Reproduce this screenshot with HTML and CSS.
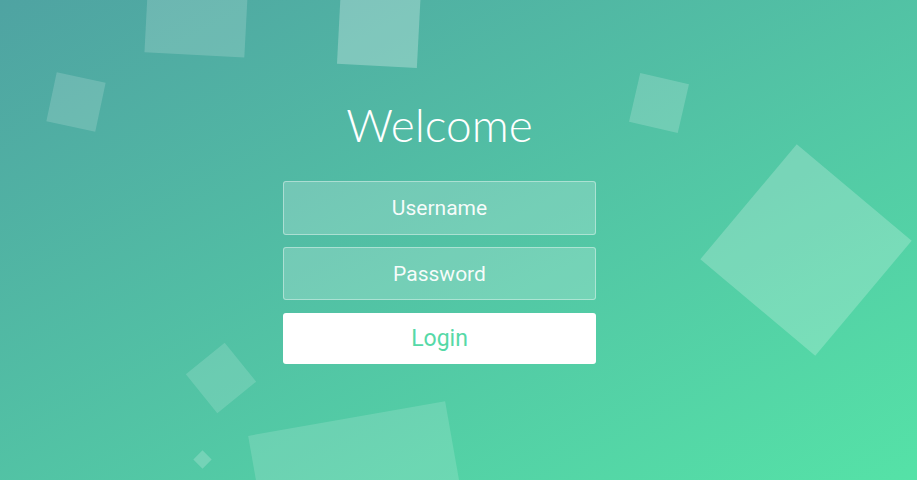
FILE: index.html
```html
<!DOCTYPE html>
<html lang="en">
<head>
<meta charset="utf-8">
<title>Welcome</title>
<link rel="stylesheet" href="styles.css">
</head>
<body>
<div class="page">
  <ul class="bubbles">
    <li class="bubble b1"></li>
    <li class="bubble b2"></li>
    <li class="bubble b3"></li>
    <li class="bubble b4"></li>
    <li class="bubble b5"></li>
    <li class="bubble b6"></li>
    <li class="bubble b7"></li>
    <li class="bubble b8"></li>
  </ul>
  <div class="container">
    <h1 class="title">Welcome</h1>
    <form class="form">
      <input class="field" type="text" placeholder="Username">
      <input class="field" type="password" placeholder="Password">
      <button class="btn" type="button">Login</button>
    </form>
  </div>
</div>
</body>
</html>
```

FILE: styles.css
```css
* { box-sizing: border-box; }
html, body { margin: 0; padding: 0; }
body {
  width: 917px;
  height: 480px;
  overflow: hidden;
  font-family: Roboto, "Liberation Sans", sans-serif;
}
.page {
  position: relative;
  width: 917px;
  height: 480px;
  overflow: hidden;
  background: linear-gradient(to bottom right, #4fa3a2 0%, #55e2a7 100%);
}
.bubbles {
  position: absolute;
  inset: 0;
  margin: 0;
  padding: 0;
  list-style: none;
  z-index: 0;
}
.bubble {
  position: absolute;
  background: rgba(255, 255, 255, 0.18);
}
.b1 { width: 100px; height: 100px; left: 147px; top: -45px; transform: rotate(3deg); background: rgba(255,255,255,0.17); }
.b2 { width: 80px; height: 80px; left: 339px; top: -14px; transform: rotate(3deg); background: rgba(255,255,255,0.27); }
.b3 { width: 50px; height: 50px; left: 51px; top: 77px; transform: rotate(12deg); background: rgba(255,255,255,0.16); }
.b4 { width: 50px; height: 50px; left: 634px; top: 78px; transform: rotate(13deg); background: rgba(255,255,255,0.18); }
.b5 { width: 150px; height: 150px; left: 731px; top: 175px; transform: rotate(40deg); background: rgba(255,255,255,0.22); }
.b6 { width: 50px; height: 50px; left: 196px; top: 353px; transform: rotate(51deg); background: rgba(255,255,255,0.15); }
.b7 { width: 13px; height: 13px; left: 196px; top: 453px; transform: rotate(45deg); background: rgba(255,255,255,0.2); }
.b8 { width: 200px; height: 200px; left: 264px; top: 417px; transform: rotate(-10deg); background: rgba(255,255,255,0.15); }

.container {
  position: relative;
  z-index: 1;
  width: 313px;
  margin-left: 283px;
  padding-top: 93px;
}
.title {
  margin: 0 0 24px;
  text-align: center;
  font-family: Lato, "Open Sans", sans-serif;
  font-weight: 300;
  font-size: 46px;
  line-height: 64px;
  color: #ffffff;
  white-space: nowrap;
}
.form {
  display: flex;
  flex-direction: column;
  gap: 12px;
}
.field {
  display: block;
  width: 313px;
  height: 54px;
  margin: 0;
  padding: 0 15px;
  border: 1px solid rgba(255, 255, 255, 0.4);
  border-radius: 3px;
  background: rgba(255, 255, 255, 0.2);
  font-family: Roboto, "Liberation Sans", sans-serif;
  font-size: 21px;
  font-weight: 400;
  color: #ffffff;
  text-align: center;
  outline: none;
}
.field + .field { height: 53px; }
.field::placeholder { color: rgba(255, 255, 255, 0.95); }
.btn {
  display: block;
  width: 313px;
  height: 51px;
  margin: 1px 0 0;
  padding: 0;
  border: 0;
  border-radius: 3px;
  background: #ffffff;
  font-family: Roboto, "Liberation Sans", sans-serif;
  font-size: 23px;
  font-weight: 400;
  color: #56d9a7;
  cursor: pointer;
}
```
